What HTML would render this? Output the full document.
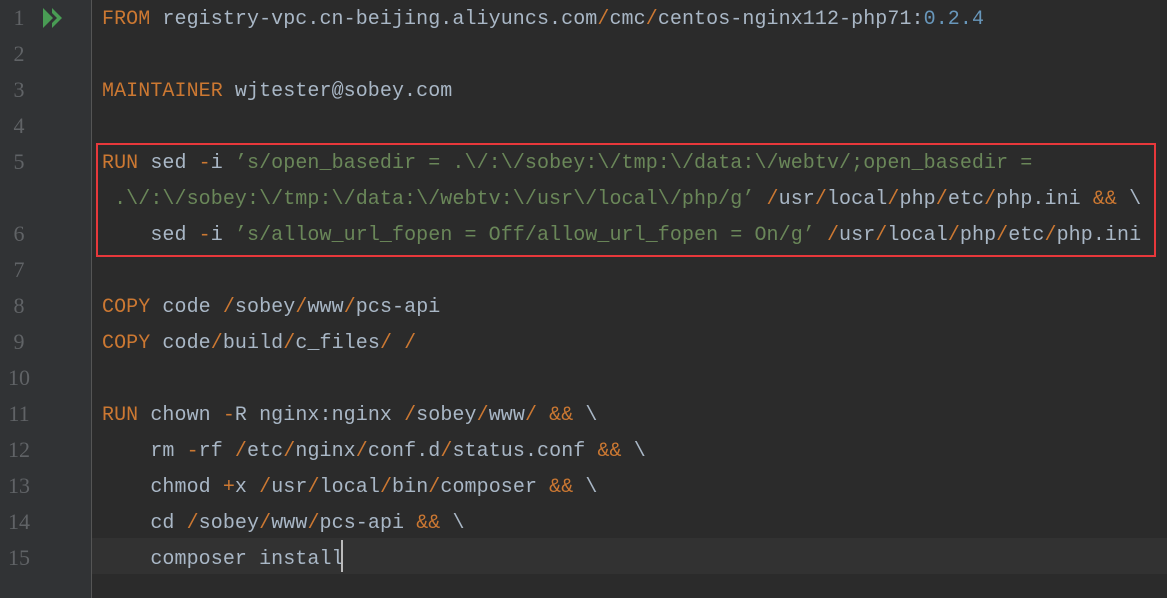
<!DOCTYPE html>
<html><head><meta charset="utf-8"><style>
body{margin:0;width:1167px;height:598px;background:#2b2b2b;overflow:hidden;position:relative;font-family:"Liberation Mono",monospace;}
.g{position:absolute;left:0;top:0;width:91px;height:598px;background:#313335;border-right:1px solid #555;}
.cur{position:absolute;left:92px;top:538px;width:1075px;height:36px;background:#323232;}
.n{position:absolute;left:0;width:38px;text-align:center;color:#606366;font-size:22px;line-height:36px;font-family:"Liberation Serif",serif;}
.r{position:absolute;left:102px;font-size:20px;line-height:36px;color:#a9b7c6;white-space:pre;margin-top:2px;letter-spacing:0.08px;}
.k{color:#cc7832;}.s{color:#6a8759;}.b{color:#6897bb;}
.box{position:absolute;left:96px;top:143px;width:1056px;height:110px;border:2px solid #e8383b;}
.caret{position:absolute;left:341px;top:540px;width:2px;height:32px;background:#bbb;}
</style></head><body>
<div class="g"></div><div class="cur"></div>
<svg style="position:absolute;left:42px;top:6px" width="24" height="24" viewBox="0 0 24 24"><path d="M1 2 L11 12 L1 22 Z M10 2 L20 12 L10 22 L10 17 L15 12 L10 7 Z" fill="#499c54"/></svg>
<div class="n" style="top:0">1</div><div class="n" style="top:36px">2</div><div class="n" style="top:72px">3</div><div class="n" style="top:108px">4</div><div class="n" style="top:144px">5</div><div class="n" style="top:216px">6</div><div class="n" style="top:252px">7</div><div class="n" style="top:288px">8</div><div class="n" style="top:324px">9</div><div class="n" style="top:360px">10</div><div class="n" style="top:396px">11</div><div class="n" style="top:432px">12</div><div class="n" style="top:468px">13</div><div class="n" style="top:504px">14</div><div class="n" style="top:540px">15</div>
<div class="r" style="top:0"><span class="k">FROM</span> registry-vpc.cn-beijing.aliyuncs.com<span class="k">/</span>cmc<span class="k">/</span>centos-nginx112-php71:<span class="b">0.2.4</span></div>
<div class="r" style="top:72px"><span class="k">MAINTAINER</span> wjtester@sobey.com</div>
<div class="r" style="top:144px"><span class="k">RUN</span> sed <span class="k">-</span>i <span class="s">’s/open_basedir = .\/:\/sobey:\/tmp:\/data:\/webtv/;open_basedir =</span></div>
<div class="r" style="top:180px"><span class="s"> .\/:\/sobey:\/tmp:\/data:\/webtv:\/usr\/local\/php/g’</span> <span class="k">/</span>usr<span class="k">/</span>local<span class="k">/</span>php<span class="k">/</span>etc<span class="k">/</span>php.ini <span class="k">&amp;&amp;</span> \</div>
<div class="r" style="top:216px">    sed <span class="k">-</span>i <span class="s">’s/allow_url_fopen = Off/allow_url_fopen = On/g’</span> <span class="k">/</span>usr<span class="k">/</span>local<span class="k">/</span>php<span class="k">/</span>etc<span class="k">/</span>php.ini</div>
<div class="r" style="top:288px"><span class="k">COPY</span> code <span class="k">/</span>sobey<span class="k">/</span>www<span class="k">/</span>pcs-api</div>
<div class="r" style="top:324px"><span class="k">COPY</span> code<span class="k">/</span>build<span class="k">/</span>c_files<span class="k">/</span> <span class="k">/</span></div>
<div class="r" style="top:396px"><span class="k">RUN</span> chown <span class="k">-</span>R nginx:nginx <span class="k">/</span>sobey<span class="k">/</span>www<span class="k">/</span> <span class="k">&amp;&amp;</span> \</div>
<div class="r" style="top:432px">    rm <span class="k">-</span>rf <span class="k">/</span>etc<span class="k">/</span>nginx<span class="k">/</span>conf.d<span class="k">/</span>status.conf <span class="k">&amp;&amp;</span> \</div>
<div class="r" style="top:468px">    chmod <span class="k">+</span>x <span class="k">/</span>usr<span class="k">/</span>local<span class="k">/</span>bin<span class="k">/</span>composer <span class="k">&amp;&amp;</span> \</div>
<div class="r" style="top:504px">    cd <span class="k">/</span>sobey<span class="k">/</span>www<span class="k">/</span>pcs-api <span class="k">&amp;&amp;</span> \</div>
<div class="r" style="top:540px">    composer install</div>
<div class="caret"></div>
<div class="box"></div>
</body></html>
